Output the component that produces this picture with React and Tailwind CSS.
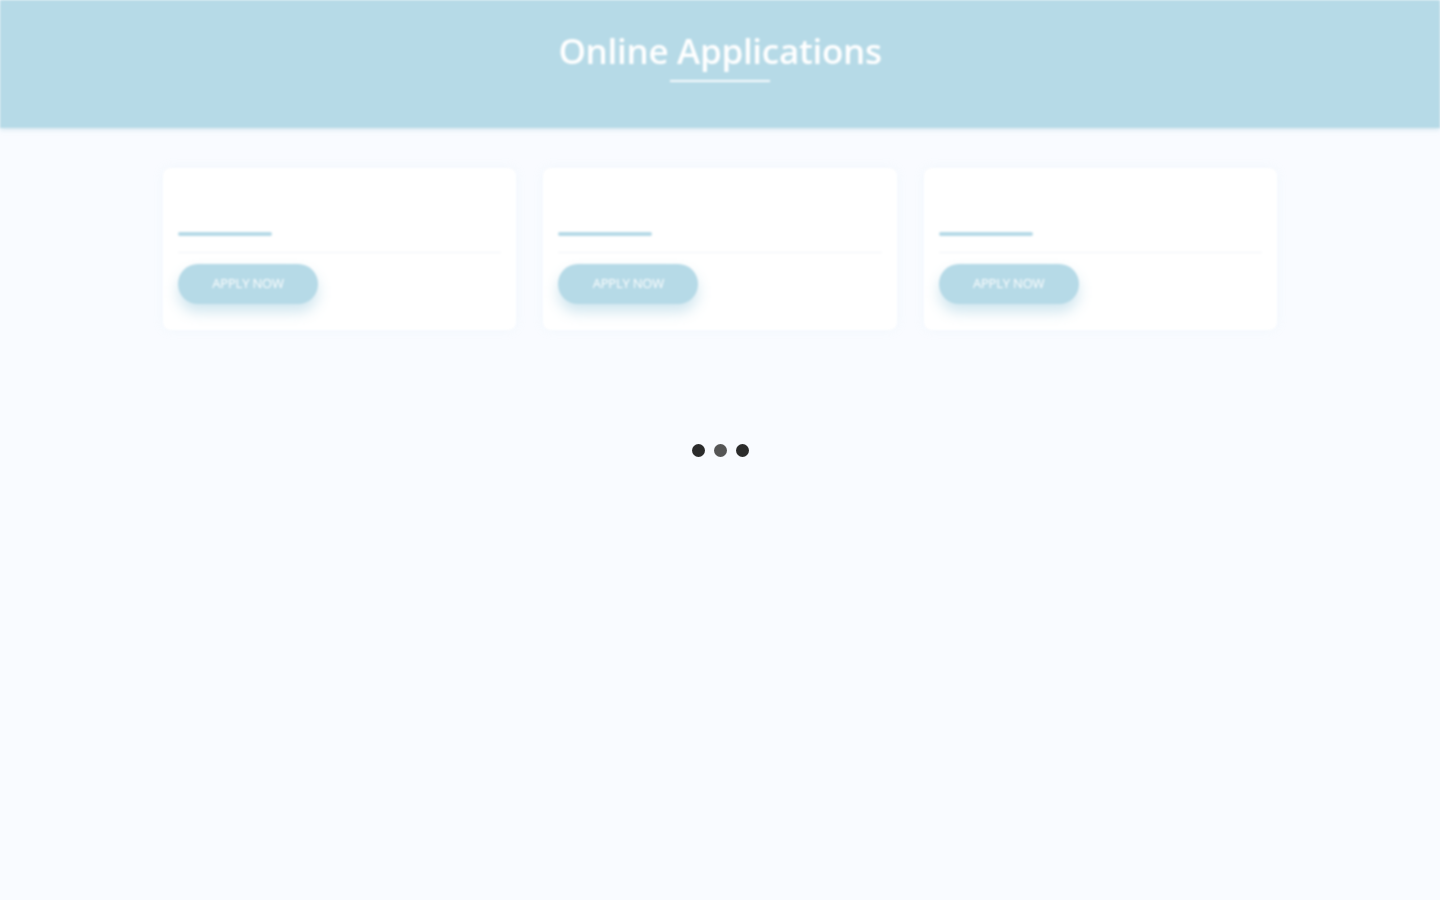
import React from 'react';

const cards = [0, 1, 2];

const ApplicationCard = () => (
  <div className="bg-white rounded-lg px-[15px] pt-[64px] pb-[26px] shadow-[0_0_12px_rgba(182,218,231,0.12)]">
    <div className="w-[94px] h-[4px] bg-[#b6dae7] rounded-sm" />
    <div className="h-px bg-[#f1f4f8] mt-[16px] mb-[11px]" />
    <button className="w-[140px] h-[40px] rounded-full bg-[#b6dae7] text-white text-[13px] tracking-[-0.2px] shadow-[0_8px_14px_rgba(150,200,220,0.45)]">
      APPLY NOW
    </button>
  </div>
);

export default function App() {
  return (
    <div className="min-h-[900px] bg-[#f9fbff] relative font-['Open_Sans','Lato',sans-serif]">
      <div className="blur-[1.2px]">
        {/* header */}
        <header className="h-[128px] bg-[#b6dae7] flex flex-col items-center pt-[28px] shadow-[0_2px_4px_rgba(160,200,215,0.35)]">
          <h1 className="text-white font-semibold text-[35px] leading-[46px] tracking-[-0.3px]">Online Applications</h1>
          <div className="w-[100px] h-[2px] bg-white/90 mt-[6px]" />
        </header>

        {/* cards */}
        <main className="w-[1114px] mx-auto mt-[40px] grid grid-cols-3 gap-[27px]">
          {cards.map((i) => (
            <ApplicationCard key={i} />
          ))}
        </main>
      </div>

      {/* loading overlay */}
      <div className="fixed inset-0 flex items-center justify-center gap-[9px]">
        <span className="w-[13px] h-[13px] rounded-full bg-[#2b2b2b]" />
        <span className="w-[13px] h-[13px] rounded-full bg-[#555555]" />
        <span className="w-[13px] h-[13px] rounded-full bg-[#2b2b2b]" />
      </div>
    </div>
  );
}
